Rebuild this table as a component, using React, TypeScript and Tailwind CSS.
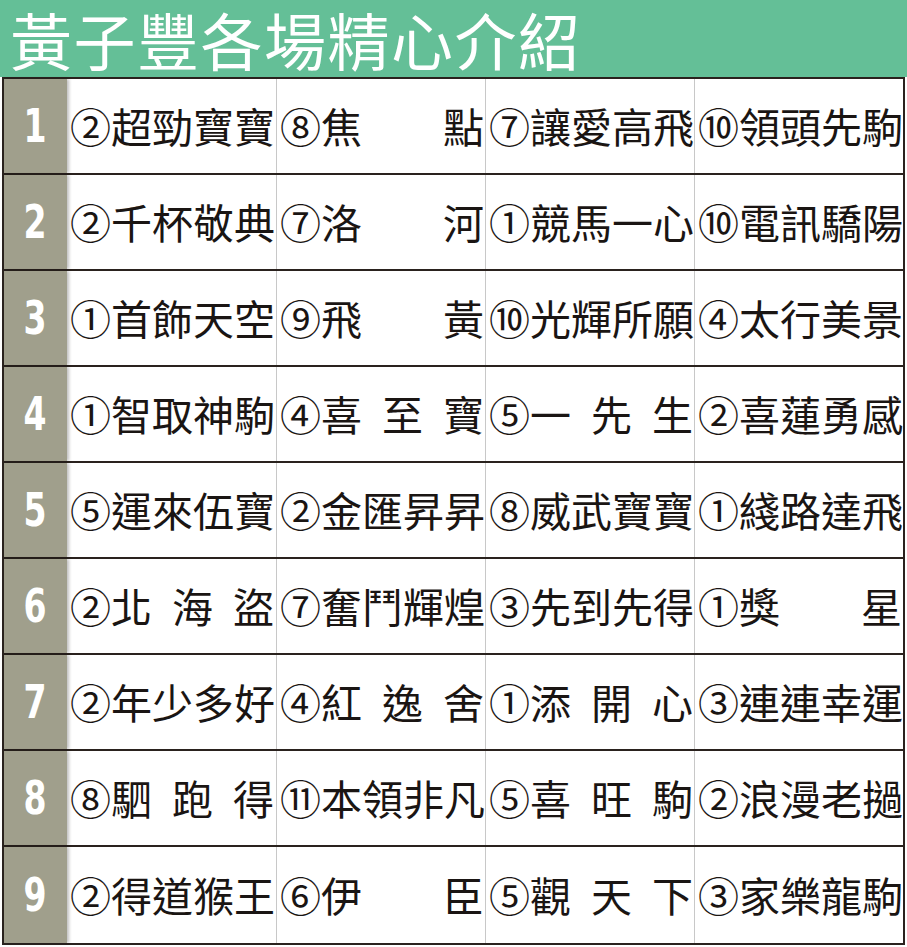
import React from "react";

type Entry = [string, string];

const rows: Entry[][] = [
  [["②", "超勁寶寶"], ["⑧", "焦點"], ["⑦", "讓愛高飛"], ["⑩", "領頭先駒"]],
  [["②", "千杯敬典"], ["⑦", "洛河"], ["①", "競馬一心"], ["⑩", "電訊驕陽"]],
  [["①", "首飾天空"], ["⑨", "飛黃"], ["⑩", "光輝所願"], ["④", "太行美景"]],
  [["①", "智取神駒"], ["④", "喜至寶"], ["⑤", "一先生"], ["②", "喜蓮勇感"]],
  [["⑤", "運來伍寶"], ["②", "金匯昇昇"], ["⑧", "威武寶寶"], ["①", "綫路達飛"]],
  [["②", "北海盜"], ["⑦", "奮鬥輝煌"], ["③", "先到先得"], ["①", "獎星"]],
  [["②", "年少多好"], ["④", "紅逸舍"], ["①", "添開心"], ["③", "連連幸運"]],
  [["⑧", "駟跑得"], ["⑪", "本領非凡"], ["⑤", "喜旺駒"], ["②", "浪漫老撾"]],
  [["②", "得道猴王"], ["⑥", "伊臣"], ["⑤", "觀天下"], ["③", "家樂龍駒"]],
];

const Cell = ({ entry, first }: { entry: Entry; first: boolean }) => {
  const [num, name] = entry;
  return (
    <div
      className={`flex items-center pl-[3px] ${first ? "" : "border-l border-[#c8c8c8]"}`}
    >
      <span className="w-[41px] text-center">{num}</span>
      <span className="flex w-[163px] justify-between">
        {name.split("").map((ch, i) => (
          <span key={i}>{ch}</span>
        ))}
      </span>
    </div>
  );
};

const App = () => {
  return (
    <div className="w-[907px] h-[947px] bg-white overflow-hidden">
      <header className="h-[77px] bg-[#64bf97] flex items-center pl-[10px] pt-[2px]">
        <h1
          className="text-white text-[62px] leading-[1.15] tracking-[1.5px] font-normal"
          style={{ fontFamily: '"Noto Sans CJK TC", "Noto Sans CJK SC", sans-serif' }}
        >
          黃子豐各場精心介紹
        </h1>
      </header>
      <div className="px-[2px]">
        <div
          className="border-2 border-[#2a221e] text-[41px] text-[#1a1513]"
          style={{ fontFamily: '"Noto Sans CJK TC", "Noto Sans CJK SC", sans-serif' }}
        >
          {rows.map((row, r) => (
            <div
              key={r}
              className={`grid grid-cols-[63px_repeat(4,1fr)] h-[96px] ${
                r < rows.length - 1 ? "border-b-2 border-[#2a221e]" : ""
              }`}
            >
              <div className="relative bg-[#a09f8c] flex items-center justify-center shadow-[2px_0_3px_rgba(0,0,0,0.25)] z-10">
                <span
                  className="text-white font-black text-[46px] leading-none scale-x-[0.72]"
                  style={{ fontFamily: '"DejaVu Sans", sans-serif' }}
                >
                  {r + 1}
                </span>
              </div>
              {row.map((e, i) => (
                <Cell key={i} entry={e} first={i === 0} />
              ))}
            </div>
          ))}
        </div>
      </div>
    </div>
  );
};

export default App;
